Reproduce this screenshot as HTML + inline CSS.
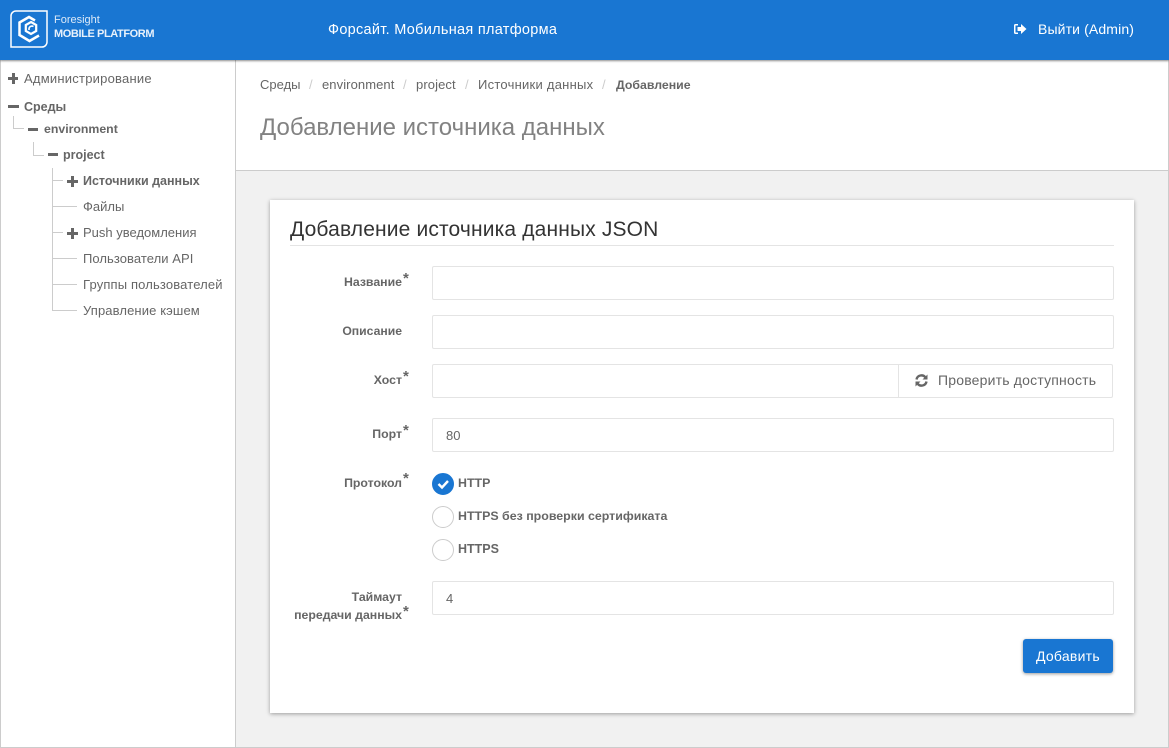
<!DOCTYPE html>
<html lang="ru"><head><meta charset="utf-8"><title>Форсайт</title>
<style>
html,body{margin:0;padding:0;background:#fff}
#p{position:relative;width:1169px;height:748px;overflow:hidden;background:#f1f1f1;font-family:"Liberation Sans","DejaVu Sans",sans-serif;font-size:13px;color:#666}
.a,.t,.i,.r{position:absolute}
.t{white-space:nowrap;line-height:16px;height:16px}
.b{font-weight:bold}
.l{text-align:right;font-weight:bold;width:199px;left:203px;font-size:12.3px;color:#666}
.i{box-sizing:border-box;background:#fff;border:1px solid #e4e4e4;border-radius:2px;height:34px;left:432px;width:682px}
.g{position:absolute;background:#ccc}
.r{box-sizing:border-box;width:22px;height:22px;border-radius:50%;left:432px;background:#fff;border:1px solid #ccc}
.st{font-size:15px;font-weight:bold;left:403px;color:#666}
</style></head><body><div id="p">
<div class="a" style="left:0;top:60px;width:236px;height:688px;background:#fff;border-left:1px solid #ccc;box-sizing:border-box;border-right:1px solid #ccc"></div>
<div class="a" style="left:236px;top:60px;width:933px;height:110px;background:#fff;border-bottom:1px solid #ccc;box-sizing:content-box"></div>
<div class="a" style="left:1168px;top:60px;width:1px;height:688px;background:#ccc"></div>
<div class="a" style="left:0;top:747px;width:1169px;height:1px;background:#ccc"></div>

<div class="a" style="left:0;top:0;width:1169px;height:60px;background:#1976d2;box-shadow:0 1px 2px rgba(0,0,0,.45)"></div>
<svg class="a" style="left:10px;top:10px" width="38" height="38" viewBox="0 0 38 38" fill="none" stroke="#fff">
<path d="M6 1H37V32a5 5 0 0 1-5 5H1V6a5 5 0 0 1 5-5Z" stroke-width="1.5"/>
<path d="M25 10.500 19 7 9.500 12.500V25L19.500 31 29 25.500" stroke-width="2.500"/>
<path d="M21 12 26.200 15V21L21 24 15.800 21V15Z" stroke-width="2.200"/>
<path d="M23.500 16.500A3 3 0 0 0 19 18.500V20" stroke-width="1.600"/>
</svg>
<div class="t" style="left:54px;top:12px;color:#dbe9f8;font-size:11px">Foresight</div>
<div class="t b" style="left:54px;top:26px;color:#e8f1fb;font-size:11px;letter-spacing:-.4px">MOBILE PLATFORM</div>
<div class="t" style="left:328px;top:22px;color:#fff;font-size:14.5px;letter-spacing:.29px">Форсайт. Мобильная платформа</div>
<svg class="a" style="left:1013px;top:23px" width="14" height="12" viewBox="0 0 14 12" fill="#fff"><path d="M5 1H2.500A1.500 1.500 0 0 0 1 2.500v7A1.500 1.500 0 0 0 2.500 11H5V9.500H2.500V2.500H5Z"/><path d="M8 1 13.500 6 8 11V8H4.500V4H8Z"/></svg>
<div class="t" style="left:1038px;top:21px;color:#fff;font-size:14px;letter-spacing:.13px">Выйти (Admin)</div>

<!-- tree -->
<div class="g" style="left:8px;top:77px;width:10px;height:3px;background:#666"></div><div class="g" style="left:11.500px;top:73px;width:3px;height:11px;background:#666"></div>
<div class="t" style="left:24px;top:71px;letter-spacing:.23px">Администрирование</div>
<div class="g" style="left:8px;top:105px;width:11px;height:3px;background:#666"></div>
<div class="t b" style="left:24px;top:99px;font-size:12.500px">Среды</div>
<div class="g" style="left:13px;top:116px;width:1px;height:13px"></div><div class="g" style="left:13px;top:128px;width:11px;height:1px"></div>
<div class="g" style="left:28px;top:128px;width:10px;height:3px;background:#666"></div>
<div class="t b" style="left:44px;top:121px;font-size:12.300px">environment</div>
<div class="g" style="left:33px;top:142px;width:1px;height:13px"></div><div class="g" style="left:33px;top:155px;width:11px;height:1px"></div>
<div class="g" style="left:48px;top:153px;width:10px;height:3px;background:#666"></div>
<div class="t b" style="left:63px;top:147px;font-size:12.500px">project</div>
<div class="g" style="left:52px;top:168px;width:1px;height:143px"></div>
<div class="g" style="left:52px;top:180px;width:11px;height:1px"></div>
<div class="g" style="left:52px;top:206px;width:25px;height:1px"></div>
<div class="g" style="left:52px;top:232px;width:11px;height:1px"></div>
<div class="g" style="left:52px;top:258px;width:25px;height:1px"></div>
<div class="g" style="left:52px;top:284px;width:25px;height:1px"></div>
<div class="g" style="left:52px;top:310px;width:25px;height:1px"></div>
<div class="g" style="left:67px;top:180px;width:11px;height:3px;background:#666"></div><div class="g" style="left:71px;top:176px;width:3px;height:11px;background:#666"></div>
<div class="g" style="left:67px;top:232px;width:11px;height:3px;background:#666"></div><div class="g" style="left:71px;top:228px;width:3px;height:11px;background:#666"></div>
<div class="t b" style="left:83px;top:173px;font-size:12.500px">Источники данных</div>
<div class="t" style="left:83px;top:199px">Файлы</div>
<div class="t" style="left:83px;top:225px">Push уведомления</div>
<div class="t" style="left:83px;top:251px;letter-spacing:.06px">Пользователи API</div>
<div class="t" style="left:83px;top:277px;letter-spacing:.15px">Группы пользователей</div>
<div class="t" style="left:83px;top:303px;letter-spacing:.12px">Управление кэшем</div>

<!-- header -->
<div class="t" style="left:260px;top:77px">Среды</div>
<div class="t" style="left:309px;top:77px;color:#ccc">/</div>
<div class="t" style="left:322px;top:77px;letter-spacing:.08px">environment</div>
<div class="t" style="left:403px;top:77px;color:#ccc">/</div>
<div class="t" style="left:416px;top:77px;letter-spacing:.1px">project</div>
<div class="t" style="left:465px;top:77px;color:#ccc">/</div>
<div class="t" style="left:478px;top:77px;letter-spacing:.25px">Источники данных</div>
<div class="t" style="left:602px;top:77px;color:#ccc">/</div>
<div class="t b" style="left:616px;top:77px;font-size:12.300px">Добавление</div>
<div class="t" style="left:260px;top:114px;height:28px;line-height:28px;font-size:24px;color:#828282">Добавление источника данных</div>

<!-- card -->
<div class="a" style="left:270px;top:200px;width:864px;height:513px;background:#fff;box-shadow:0 1px 4px rgba(0,0,0,.35)"></div>
<div class="t" style="left:290px;top:217px;height:26px;line-height:26px;font-size:21px;letter-spacing:.15px;color:#333">Добавление источника данных JSON</div>
<div class="a" style="left:290px;top:245px;width:824px;height:1px;background:#e4e4e4"></div>

<div class="t l" style="top:274px">Название</div><div class="t st" style="top:271px">*</div>
<div class="i" style="top:266px"></div>
<div class="t l" style="top:323px;font-size:12.200px">Описание</div>
<div class="i" style="top:315px"></div>
<div class="t l" style="top:372px">Хост</div><div class="t st" style="top:369px">*</div>
<div class="i" style="top:364px;width:681px"></div>
<div class="a" style="left:898px;top:364px;width:1px;height:34px;background:#e4e4e4"></div>
<svg class="a" style="left:915px;top:374px" width="13" height="13" viewBox="0 0 13 13" fill="none" stroke="#666" stroke-width="2.400"><path d="M1.500 5.500A5 5 0 0 1 10.500 3.500"/><path d="M11.500 7.500A5 5 0 0 1 2.500 9.500"/><path d="M12.500 .5V5.500H7.500Z" fill="#666" stroke="none"/><path d="M.5 12.500V7.500H5.500Z" fill="#666" stroke="none"/></svg>
<div class="t" style="left:938px;top:372px;font-size:14px;letter-spacing:.19px">Проверить доступность</div>
<div class="t l" style="top:426px">Порт</div><div class="t st" style="top:423px">*</div>
<div class="i" style="top:418px"></div>
<div class="t" style="left:446px;top:428px">80</div>
<div class="t l" style="top:475px">Протокол</div><div class="t st" style="top:471px">*</div>
<div class="r" style="top:473px;background:#1976d2;border-color:#1976d2"></div>
<svg class="a" style="left:432px;top:473px" width="22" height="22" viewBox="0 0 22 22" fill="none" stroke="#fff" stroke-width="2.400"><path d="M6.500 11 10 14.500 16 8"/></svg>
<div class="t b" style="left:458px;top:475px;font-size:12.400px">HTTP</div>
<div class="r" style="top:506px"></div>
<div class="t b" style="left:458px;top:508px;font-size:12.400px">HTTPS без проверки сертификата</div>
<div class="r" style="top:539px"></div>
<div class="t b" style="left:458px;top:541px;font-size:12.500px">HTTPS</div>
<div class="t l" style="top:589px">Таймаут</div>
<div class="t l" style="top:607px">передачи данных</div><div class="t st" style="top:604px">*</div>
<div class="i" style="top:581px"></div>
<div class="t" style="left:446px;top:591px">4</div>
<div class="a" style="left:1023px;top:639px;width:90px;height:34px;border-radius:3px;background:#1976d2;box-shadow:0 1px 3px rgba(0,0,0,.4)"></div>
<div class="t" style="left:1036px;top:648px;color:#fff;font-size:14px;letter-spacing:.25px">Добавить</div>
</div></body></html>
